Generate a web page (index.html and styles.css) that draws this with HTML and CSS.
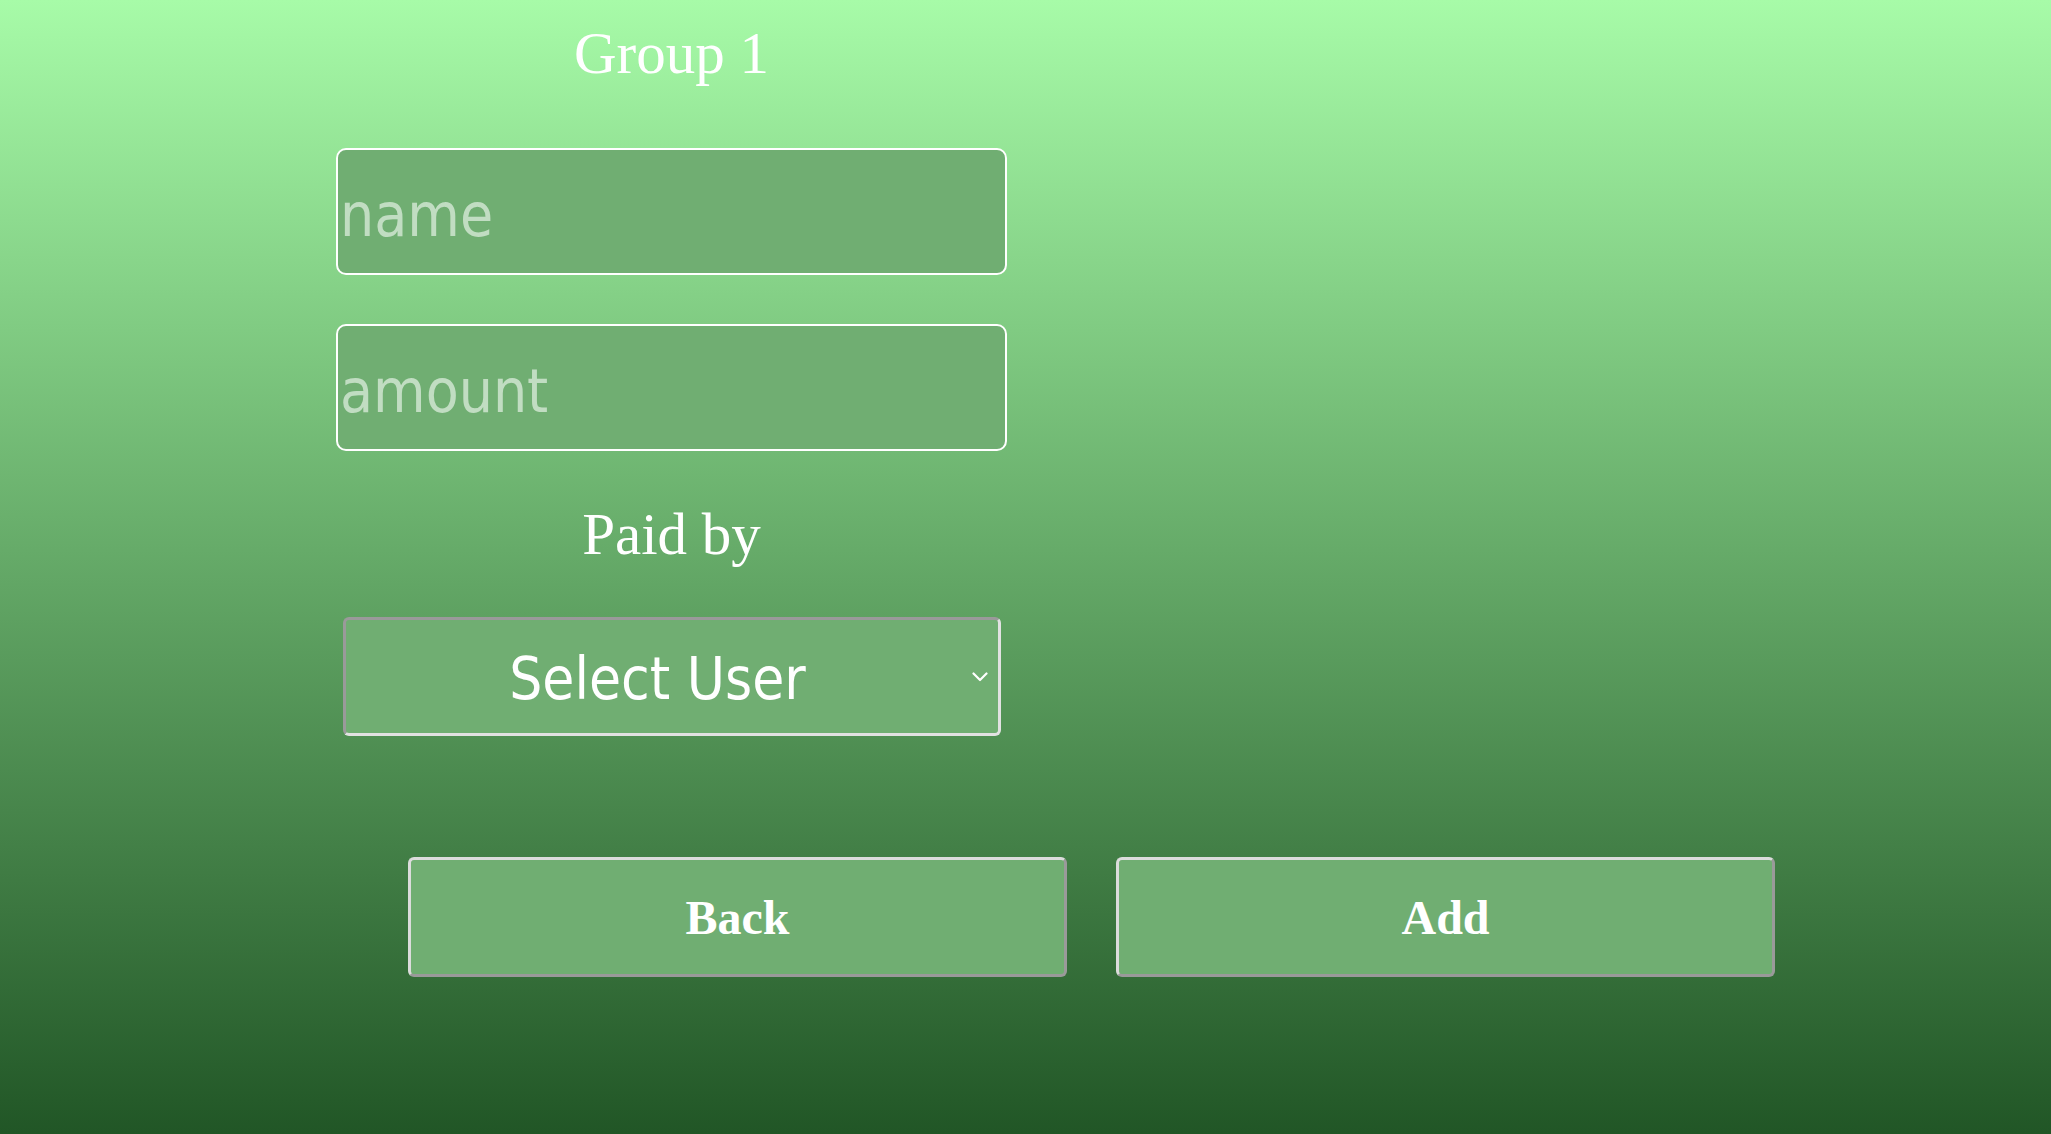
FILE: index.html
```html
<!DOCTYPE html>
<html lang="en">
<head>
<meta charset="utf-8">
<title>Group 1</title>
<link rel="stylesheet" href="styles.css">
</head>
<body>
<main class="page">
  <section class="form">
    <h1 class="title">Group 1</h1>
    <input class="field" type="text" placeholder="name">
    <input class="field field-second" type="text" placeholder="amount">
    <h2 class="label">Paid by</h2>
    <div class="select-wrap">
      <select class="select">
        <option>Select User</option>
      </select>
      <svg class="chevron" width="16" height="10" viewBox="0 0 16 10" aria-hidden="true"><path d="M1.5 1.5 L8 8 L14.5 1.5" fill="none" stroke="#fff" stroke-width="2.2" stroke-linecap="round" stroke-linejoin="round"/></svg>
    </div>
  </section>
  <div class="actions">
    <button class="btn" type="button">Back</button>
    <button class="btn" type="button">Add</button>
  </div>
</main>
</body>
</html>
```

FILE: styles.css
```css
html, body {
  margin: 0;
  padding: 0;
}

body {
  min-height: 100vh;
  background: linear-gradient(to bottom, #a7fba8 0%, #215626 100%);
  font-family: "Liberation Serif", "Times New Roman", serif;
  color: #fff;
}

.page {
  display: flex;
  flex-direction: column;
  padding-top: 20px;
}

.form {
  width: 671px;
  margin-left: 336px;
  display: flex;
  flex-direction: column;
  align-items: center;
}

.title,
.label {
  margin: 0;
  font-family: "Liberation Serif", "Times New Roman", serif;
  font-weight: normal;
  font-size: 59px;
  line-height: 66px;
  color: #fff;
  text-align: center;
}

.field {
  box-sizing: border-box;
  width: 671px;
  height: 127px;
  margin: 62px 0 0;
  padding: 6px 2px 0;
  border: 2px solid #fff;
  border-radius: 10px;
  background: #70ae72;
  color: #fff;
  font-family: "DejaVu Sans Condensed", "DejaVu Sans", sans-serif;
  font-stretch: condensed;
  font-size: 60px;
  outline: none;
}

.field-second {
  margin-top: 49px;
}

.field::placeholder {
  color: #c1ddc2;
  opacity: 1;
}

.label {
  margin-top: 50px;
}

.select-wrap {
  position: relative;
  margin-top: 50px;
  width: 658px;
  height: 119px;
}

.select {
  box-sizing: border-box;
  width: 100%;
  height: 100%;
  -webkit-appearance: none;
  appearance: none;
  margin: 0;
  padding: 4px 28px 0 0;
  border: 3px solid;
  border-color: #9a9a9a #e2e2e2 #e2e2e2 #9a9a9a;
  border-radius: 6px;
  background: #70ae72;
  color: #fff;
  font-family: "DejaVu Sans Condensed", "DejaVu Sans", sans-serif;
  font-stretch: condensed;
  font-size: 58px;
  text-align: center;
  text-align-last: center;
  outline: none;
}

.chevron {
  position: absolute;
  right: 13px;
  top: 55px;
  pointer-events: none;
}

.actions {
  display: flex;
  gap: 49px;
  margin-top: 121px;
  margin-left: 408px;
}

.btn {
  box-sizing: border-box;
  width: 659px;
  height: 120px;
  margin: 0;
  padding: 0;
  border: 3px solid;
  border-color: #dcdcdc #9a9a9a #9a9a9a #dcdcdc;
  border-radius: 6px;
  background: #70ae72;
  color: #fff;
  font-family: "Liberation Serif", "Times New Roman", serif;
  font-weight: bold;
  font-size: 48px;
  cursor: pointer;
}
```
